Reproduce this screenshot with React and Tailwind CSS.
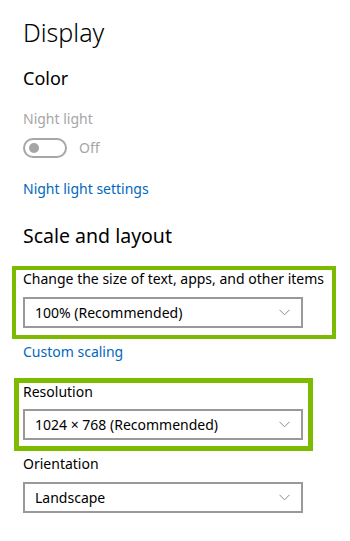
import React from "react";

const font = { fontFamily: '"Noto Sans", "Open Sans", sans-serif' };

const Chevron = () => (
  <svg width="11" height="7" viewBox="0 0 11 7" fill="none" className="shrink-0">
    <polyline points="0.5,0.8 5.5,5.8 10.5,0.8" stroke="#8a8a8a" strokeWidth="1" />
  </svg>
);

const Dropdown = ({ value, className = "" }) => (
  <div
    className={`w-[280px] h-[31px] border-2 border-[#999999] bg-white flex items-center justify-between pl-[10px] pr-[11px] ${className}`}
  >
    <span className="text-[14px] leading-[27px] text-black">{value}</span>
    <Chevron />
  </div>
);

export default function App() {
  return (
    <div className="w-[350px] h-[541px] bg-white overflow-hidden pl-[23px] pt-[16px]" style={font}>
      <h1 className="text-[25px] leading-[32px] font-light text-black">Display</h1>

      {/* Color */}
      <h2 className="mt-[18px] text-[18px] leading-[24px] text-black">Color</h2>
      <div className="mt-[19px] text-[14px] leading-[20px] text-[#a6a6a6]">Night light</div>
      <div className="mt-[9px] flex items-center gap-[12px]">
        <div className="w-[44px] h-[20px] rounded-full border-2 border-[#a6a6a6] flex items-center pl-[4px]">
          <div className="w-[10px] h-[10px] rounded-full bg-[#a6a6a6]" />
        </div>
        <span className="text-[14px] leading-[20px] text-[#a6a6a6]">Off</span>
      </div>
      <div className="mt-[21px] text-[14px] leading-[20px] text-[#0067c0]">Night light settings</div>

      {/* Scale and layout */}
      <h2 className="mt-[24px] text-[19.5px] leading-[26px] text-black">Scale and layout</h2>

      <div className="mt-[17px] -ml-[11px] w-[324px] border-4 border-[#7cbb00] pl-[7px] pt-[1px] pb-[7px]">
        <div className="text-[14px] leading-[16px] text-black whitespace-nowrap">
          Change the size of text, apps, and other items
        </div>
        <Dropdown value="100% (Recommended)" className="mt-[10px]" />
      </div>

      <div className="mt-[3px] text-[14px] leading-[20px] text-[#0067c0]">Custom scaling</div>

      <div className="mt-[16px] -ml-[9px] w-[299px] border-[5px] border-[#7cbb00] pl-[4px] pt-[1px] pb-[6px]">
        <div className="text-[14px] leading-[16px] text-black">Resolution</div>
        <Dropdown value="1024 × 768 (Recommended)" className="mt-[9px]" />
      </div>

      <div className="mt-[3px] text-[14px] leading-[20px] text-black">Orientation</div>
      <Dropdown value="Landscape" className="mt-[8px]" />
    </div>
  );
}
